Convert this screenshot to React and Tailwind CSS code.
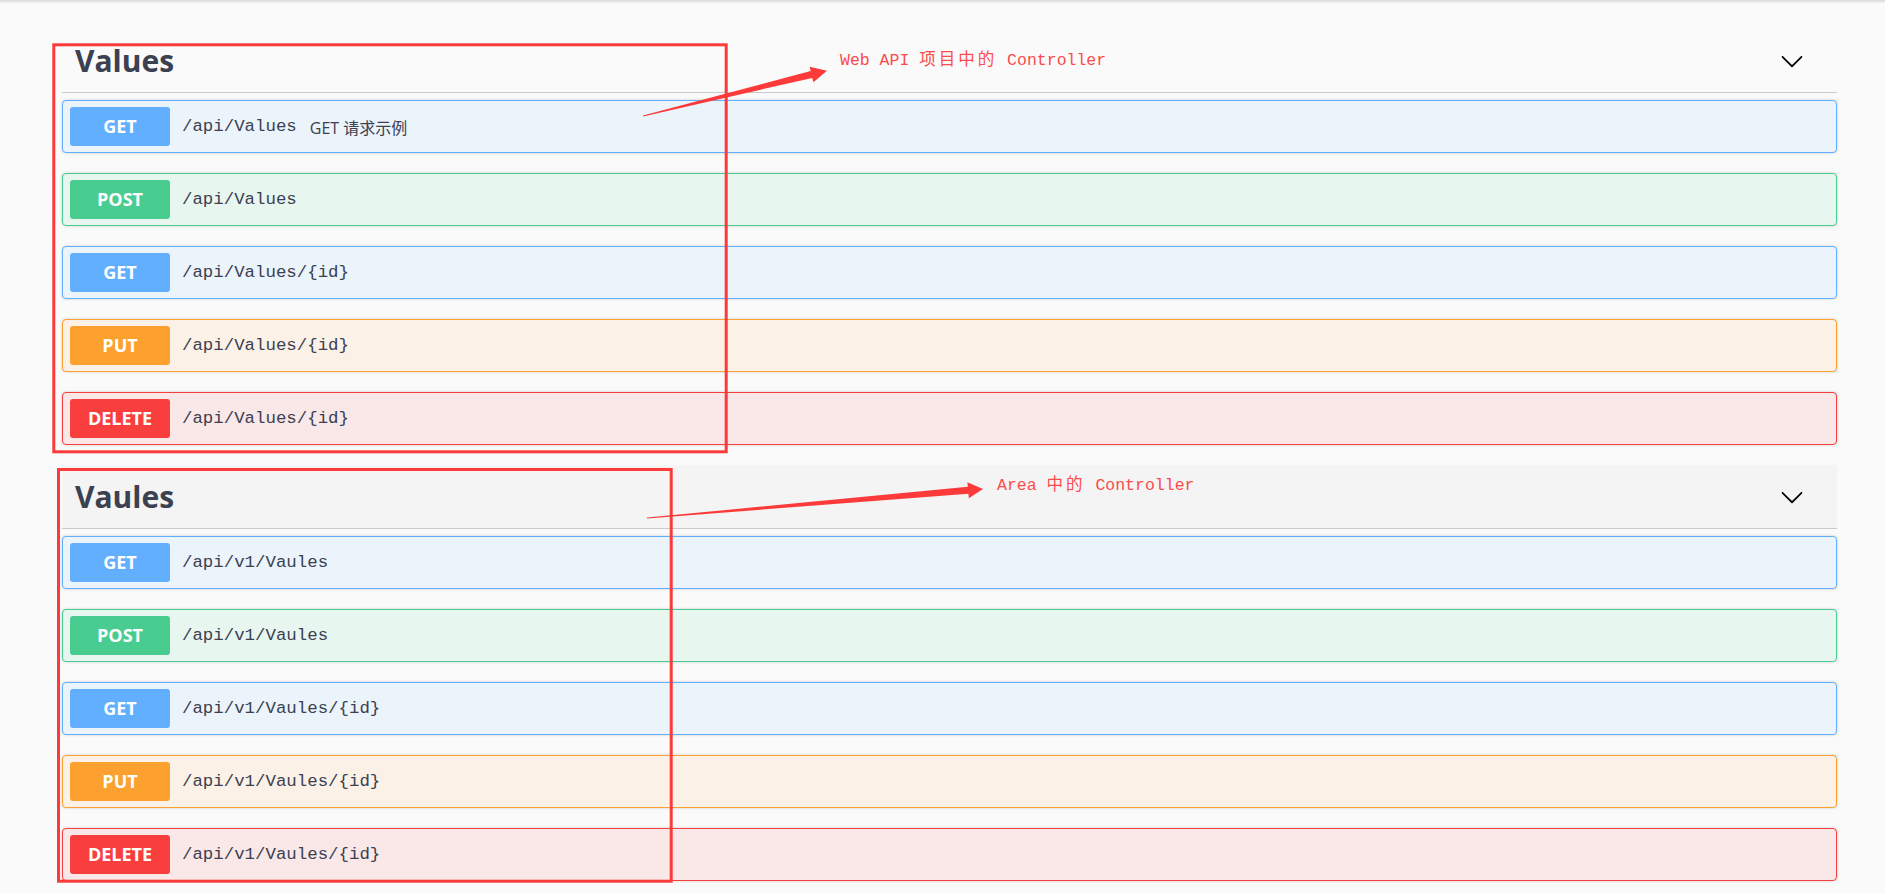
const methodStyles = {
  GET: {
    row: 'border-[#61affe] bg-[#ebf3fb]',
    badge: 'bg-[#61affe]',
  },
  POST: {
    row: 'border-[#49cc90] bg-[#e8f6f0]',
    badge: 'bg-[#49cc90]',
  },
  PUT: {
    row: 'border-[#fca130] bg-[#fbf1e6]',
    badge: 'bg-[#fca130]',
  },
  DELETE: {
    row: 'border-[#f93e3e] bg-[#fae7e7]',
    badge: 'bg-[#f93e3e]',
  },
}

const sections = [
  {
    name: 'Values',
    hovered: false,
    ops: [
      { method: 'GET', path: '/api/Values', summary: 'GET 请求示例' },
      { method: 'POST', path: '/api/Values' },
      { method: 'GET', path: '/api/Values/{id}' },
      { method: 'PUT', path: '/api/Values/{id}' },
      { method: 'DELETE', path: '/api/Values/{id}' },
    ],
  },
  {
    name: 'Vaules',
    hovered: true,
    ops: [
      { method: 'GET', path: '/api/v1/Vaules' },
      { method: 'POST', path: '/api/v1/Vaules' },
      { method: 'GET', path: '/api/v1/Vaules/{id}' },
      { method: 'PUT', path: '/api/v1/Vaules/{id}' },
      { method: 'DELETE', path: '/api/v1/Vaules/{id}' },
    ],
  },
]

function ChevronDown() {
  return (
    <svg viewBox="0 0 20 20" className="h-[24px] w-[24px]" fill="#000">
      <path d="M17.418 6.109c.272-.268.709-.268.979 0s.271.701 0 .969l-7.908 7.83c-.27.268-.707.268-.979 0l-7.908-7.83c-.27-.268-.27-.701 0-.969.271-.268.709-.268.979 0L10 13.25l7.418-7.141z" />
    </svg>
  )
}

function Operation({ method, path, summary }) {
  const style = methodStyles[method]
  return (
    <div
      className={`mb-[20px] flex h-[53px] items-center rounded-[4px] border px-[7px] shadow-[0_0_3px_rgba(0,0,0,0.19)] ${style.row}`}
    >
      <span
        className={`flex h-[39px] w-[100px] shrink-0 items-center justify-center rounded-[3px] font-['Open_Sans',sans-serif] text-[18px] font-bold text-white ${style.badge}`}
      >
        {method}
      </span>
      <span className="ml-[12px] pt-[2px] font-['Liberation_Mono',monospace] text-[17.4px] text-[#3b4151]">{path}</span>
      {summary && (
        <span className="ml-[13px] pt-[2px] font-['Open_Sans','Noto_Sans_CJK_SC',sans-serif] text-[16px] text-[#3b4151]">
          {summary}
        </span>
      )}
    </div>
  )
}

function TagSection({ name, hovered, ops }) {
  return (
    <div>
      <div
        className={`mb-[7px] flex h-[64px] items-center justify-between border-b border-[#c9cacd] pl-[13px] pr-[33px] ${
          hovered ? 'bg-[#f4f4f4]' : ''
        }`}
      >
        <h4 className="font-['Open_Sans',sans-serif] text-[30px] font-bold text-[#3b4151]">{name}</h4>
        <ChevronDown />
      </div>
      {ops.map((op, i) => (
        <Operation key={i} {...op} />
      ))}
    </div>
  )
}

// red callouts drawn on top of the docs page
function Callouts() {
  return (
    <>
      <svg className="pointer-events-none absolute left-0 top-0" width="1885" height="894">
        <rect x="53.8" y="44.8" width="672.4" height="407" fill="none" stroke="#fd3a3a" strokeWidth="3" />
        <rect x="58.5" y="469.5" width="612.7" height="411.7" fill="none" stroke="#fd3a3a" strokeWidth="3" />
        <polygon
          points="643,115.6 810.7,71.1 809.6,66.7 827,70.7 813.4,82.3 812.3,77.9 643,116.4"
          fill="#fd3a3a"
        />
        <polygon
          points="647,517.6 967.8,486.8 967.4,482.3 983,489 968.8,498.3 968.4,493.8 647,518.4"
          fill="#fd3a3a"
        />
      </svg>
      <div className="absolute left-[840px] top-[51px] whitespace-pre font-['Liberation_Mono','Noto_Sans_CJK_SC',monospace] text-[16.5px] leading-[20px] text-[#fb4b4b]">
        Web API <span className="tracking-[3px]">项目中的</span> Controller
      </div>
      <div className="absolute left-[997px] top-[476px] whitespace-pre font-['Liberation_Mono','Noto_Sans_CJK_SC',monospace] text-[16.5px] leading-[20px] text-[#fb4b4b]">
        Area <span className="tracking-[3px]">中的</span> Controller
      </div>
    </>
  )
}

export default function App() {
  return (
    <div className="relative h-screen overflow-hidden bg-[#fafafa]">
      <div className="h-[3px] bg-gradient-to-b from-[#d9d9d9] to-[#f4f4f4]" />
      <div className="pl-[62px] pr-[48px] pt-[26px]">
        {sections.map(section => (
          <TagSection key={section.name} {...section} />
        ))}
      </div>
      <Callouts />
    </div>
  )
}
